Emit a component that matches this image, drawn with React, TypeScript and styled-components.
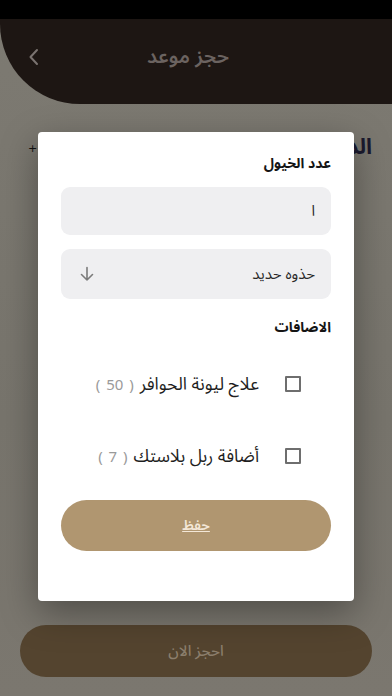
import React from "react";
import styled, { createGlobalStyle } from "styled-components";

const Global = createGlobalStyle`
  html, body { margin: 0; padding: 0; }
  body {
    width: 392px;
    height: 696px;
    overflow: hidden;
    background: #7b7870;
    font-family: "Noto Sans Arabic", "DejaVu Sans", sans-serif;
  }
  * { box-sizing: border-box; }
`;

const Page = styled.div`
  position: relative;
  width: 392px;
  height: 696px;
  display: flex;
  flex-direction: column;
  background: linear-gradient(180deg, #7d7a72 0%, #77746c 60%, #7b776f 100%);
  overflow: hidden;
`;

const StatusBar = styled.div`
  height: 19px;
  background: #000;
`;

const Header = styled.header`
  height: 85px;
  background: #1d1613;
  border-bottom-left-radius: 80px;
  display: flex;
  align-items: center;
  padding: 0 0 10px 28px;
  direction: ltr;
`;

const BackButton = styled.div`
  width: 12px;
  display: flex;
  align-items: center;
`;

const HeaderTitle = styled.h1`
  flex: 1;
  margin: 0;
  padding-right: 56px;
  text-align: center;
  font-size: 20px;
  font-weight: 600;
  color: #6b6360;
  direction: rtl;
`;

const SectionRow = styled.div`
  display: flex;
  justify-content: space-between;
  align-items: center;
  padding: 28px 20px 0 28px;
  direction: ltr;
  height: 58px;
`;

const Plus = styled.span`
  font-family: "DejaVu Sans", sans-serif;
  font-size: 11px;
  color: #111;
  margin-top: 2px;
`;

const SectionTitle = styled.span`
  font-size: 22px;
  font-weight: 700;
  color: #1b1a2e;
  direction: rtl;
`;

const Spacer = styled.div`
  flex: 1;
`;

const BookButton = styled.div`
  margin: 0 20px 19px;
  height: 52px;
  border-radius: 26px;
  background: #54442f;
  display: flex;
  align-items: center;
  justify-content: center;
  font-size: 15px;
  font-weight: 500;
  color: #8b7e6c;
  direction: rtl;
`;

const Overlay = styled.div`
  position: absolute;
  inset: 0;
  display: flex;
  flex-direction: column;
  align-items: center;
  padding-top: 132px;
`;

const Modal = styled.div`
  width: 316px;
  height: 469px;
  background: #fff;
  border-radius: 4px;
  box-shadow: 0 12px 36px rgba(0, 0, 0, 0.35);
  padding: 20px 23px 0;
  display: flex;
  flex-direction: column;
  direction: rtl;
`;

const Label = styled.div<{ $top?: number }>`
  font-size: 14px;
  font-weight: 700;
  color: #151515;
  line-height: 24px;
  margin-top: ${(p) => p.$top ?? 0}px;
`;

const Field = styled.div<{ $top: number; $h: number }>`
  height: ${(p) => p.$h}px;
  margin-top: ${(p) => p.$top}px;
  background: #efeff1;
  border-radius: 9px;
  display: flex;
  align-items: center;
  justify-content: space-between;
  padding: 0 16px 0 18px;
  font-size: 15px;
  color: #2a2a2a;
`;

const OptionRow = styled.div<{ $top: number }>`
  display: flex;
  align-items: center;
  gap: 26px;
  padding-right: 30px;
  margin-top: ${(p) => p.$top}px;
  height: 32px;
`;

const CheckBox = styled.span`
  width: 16px;
  height: 16px;
  border: 2px solid #6e6e6e;
  border-radius: 1px;
  flex: none;
`;

const OptionText = styled.span`
  font-size: 17.5px;
  color: #1f1f1f;
`;

const Price = styled.span`
  font-size: 15px;
  color: #9a9a9a;
  margin-right: 6px;
  word-spacing: 2px;
`;

const SaveButton = styled.div`
  margin-top: 28px;
  height: 51px;
  border-radius: 26px;
  background: #b09670;
  display: flex;
  align-items: center;
  justify-content: center;
  font-size: 14px;
  font-weight: 600;
  color: #f3e7d7;
  text-decoration: underline;
`;

export default function App() {
  return (
    <>
      <Global />
      <Page>
        <StatusBar />
        <Header>
          <BackButton>
            <svg width="11" height="18" viewBox="0 0 11 18" fill="none">
              <path d="M9 2 L2.5 9 L9 16" stroke="#7a7370" strokeWidth="2" strokeLinecap="round" strokeLinejoin="round" />
            </svg>
          </BackButton>
          <HeaderTitle>حجز موعد</HeaderTitle>
        </Header>
        <SectionRow>
          <Plus>+</Plus>
          <SectionTitle>الدفع</SectionTitle>
        </SectionRow>
        <Spacer />
        <BookButton>احجز الان</BookButton>
        <Overlay>
          <Modal>
            <Label>عدد الخيول</Label>
            <Field $top={11} $h={48}>
              <span>ا</span>
            </Field>
            <Field $top={14} $h={50}>
              <span>حذوه حديد</span>
              <svg width="16" height="16" viewBox="0 0 16 16" fill="none">
                <path d="M8 1.5 V14 M2.5 8.5 L8 14 L13.5 8.5" stroke="#7b7b7b" strokeWidth="1.6" strokeLinecap="round" strokeLinejoin="round" />
              </svg>
            </Field>
            <Label $top={17}>الاضافات</Label>
            <OptionRow $top={28}>
              <CheckBox />
              <OptionText>
                علاج ليونة الحوافر<Price>( 50 )</Price>
              </OptionText>
            </OptionRow>
            <OptionRow $top={40}>
              <CheckBox />
              <OptionText>
                أضافة ربل بلاستك<Price>( 7 )</Price>
              </OptionText>
            </OptionRow>
            <SaveButton>حفظ</SaveButton>
          </Modal>
        </Overlay>
      </Page>
    </>
  );
}
